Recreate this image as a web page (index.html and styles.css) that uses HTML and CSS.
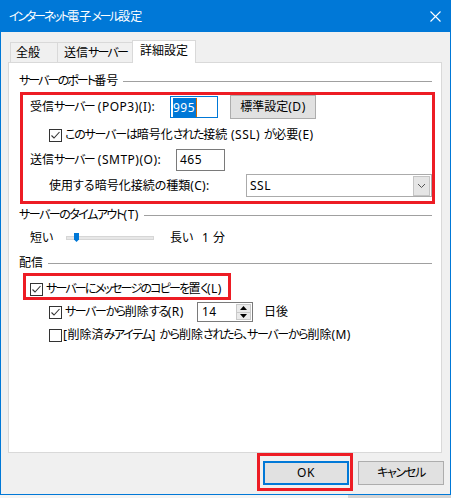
FILE: index.html
```html
<!DOCTYPE html>
<html lang="ja">
<head>
    <meta charset="UTF-8">
    <title>インターネット電子メール設定</title>
    <link rel="stylesheet" href="styles.css">
</head>
<body>

<div class="window">
    <div class="titlebar">
        <span class="title">インターネット<span class="k">電子</span>メール<span class="k">設定</span></span>
        <svg class="close" width="11" height="11" viewBox="0 0 11 11">
            <path d="M0.5 0.5L10.5 10.5M10.5 0.5L0.5 10.5" stroke="#fff" stroke-width="1.1" fill="none"/>
        </svg>
    </div>

    <div class="client">
        <div class="tabs">
            <div class="tab tab-general"><span class="k">全般</span></div>
            <div class="tab tab-send"><span class="k">送信</span>サーバー</div>
            <div class="tab tab-active"><span class="k">詳細設定</span></div>
        </div>

        <div class="panel">
            <div class="group-head head-port">サーバーのポート<span class="k">番号</span></div>

            <div class="mark port-box">
                <div class="row row-in">
                    <span class="lbl lbl-in"><span class="k">受信</span>サーバー<span class="en"> (POP3)(I):</span></span>
                    <div class="field field-in field-focus"><span class="selected en">995</span><span class="caret"></span></div>
                    <button class="btn btn-std"><span class="k">標準設定</span><span class="en">(D)</span></button>
                </div>
                <div class="row row-ssl">
                    <span class="check"><svg width="11" height="11" viewBox="0 0 11 11"><path d="M1.5 5.5L4 8L9.5 2" fill="none" stroke="#333" stroke-width="1.1"/></svg></span>
                    <span class="check-text ssl-text">このサーバーは<span class="k">暗号化</span>された<span class="k">接続</span><span class="en"> (SSL) </span>が<span class="k">必要</span><span class="en">(E)</span></span>
                </div>
                <div class="row row-out">
                    <span class="lbl lbl-out"><span class="k">送信</span>サーバー<span class="en"> (SMTP)(O):</span></span>
                    <div class="field field-out en">465</div>
                </div>
                <div class="row row-enc">
                    <span class="lbl lbl-enc"><span class="k">使用</span>する<span class="k">暗号化接続</span>の<span class="k">種類</span><span class="en">(C):</span></span>
                    <div class="combo">
                        <span class="combo-value en">SSL</span>
                        <span class="combo-btn"><svg width="9" height="6" viewBox="0 0 9 6"><path d="M1 1L4.5 4.5L8 1" fill="none" stroke="#555" stroke-width="1"/></svg></span>
                    </div>
                </div>
            </div>

            <div class="group-head head-timeout">サーバーのタイムアウト<span class="en">(T)</span></div>
            <div class="row row-slider">
                <span><span class="k">短</span>い</span>
                <div class="track"><svg class="thumb" width="5" height="9" viewBox="0 0 5 9"><path d="M0 0H5V6.5L2.5 9L0 6.5Z" fill="#0078d7"/></svg></div>
                <span class="long"><span class="k">長</span>い</span>
                <span class="minutes"><span class="en">1 </span><span class="k">分</span></span>
            </div>

            <div class="group-head head-delivery"><span class="k">配信</span></div>
            <div class="mark copy-box">
                <div class="row row-copy">
                    <span class="check"><svg width="11" height="11" viewBox="0 0 11 11"><path d="M1.5 5.5L4 8L9.5 2" fill="none" stroke="#333" stroke-width="1.1"/></svg></span>
                    <span class="check-text copy-text">サーバーにメッセージのコピーを<span class="k">置</span>く<span class="en">(L)</span></span>
                </div>
            </div>
            <div class="row row-remove">
                <span class="check"><svg width="11" height="11" viewBox="0 0 11 11"><path d="M1.5 5.5L4 8L9.5 2" fill="none" stroke="#333" stroke-width="1.1"/></svg></span>
                <span class="check-text remove-text">サーバーから<span class="k">削除</span>する<span class="en">(R)</span></span>
                <div class="spin">
                    <span class="spin-value en">14</span>
                    <span class="spin-btns">
                        <span class="spin-up"><svg width="7" height="4" viewBox="0 0 7 4"><path d="M0 4L3.5 0L7 4Z" fill="#000"/></svg></span>
                        <span class="spin-down"><svg width="7" height="4" viewBox="0 0 7 4"><path d="M0 0L3.5 4L7 0Z" fill="#000"/></svg></span>
                    </span>
                </div>
                <span class="days k">日後</span>
            </div>
            <div class="row row-deleted">
                <span class="check"></span>
                <span class="check-text deleted-text"><span class="en">[</span><span class="k">削除済</span>みアイテム<span class="en">] </span>から<span class="k">削除</span>されたら、サーバーから<span class="k">削除</span><span class="en">(M)</span></span>
            </div>
        </div>

        <div class="actions">
            <div class="mark ok-box">
                <button class="btn btn-ok"><span class="en">OK</span></button>
            </div>
            <button class="btn btn-cancel">キャンセル</button>
        </div>
    </div>
</div>
<div class="desk"></div>

</body>
</html>
```

FILE: styles.css
```css
* { box-sizing: border-box; }
body {
    margin: 0;
    background: #f4f4f4;
    font-family: "Noto Sans", "Noto Sans CJK JP", sans-serif;
    font-size: 12px;
    line-height: 16px;
    letter-spacing: -1.3px;
    color: #000;
    white-space: nowrap;
    font-feature-settings: "palt";
}
button { font: inherit; color: inherit; letter-spacing: inherit; font-feature-settings: "palt"; }

/* kanji runs keep full width, latin runs keep their own spacing */
.k { letter-spacing: 0; }
.en { letter-spacing: 0.5px; }

.window {
    width: 451px;
    height: 495px;
    border: 1px solid #0078d7;
    background: #f0f0f0;
    display: flex;
    flex-direction: column;
}
.titlebar {
    height: 31px;
    background: #0078d7;
    color: #fff;
    display: flex;
    align-items: center;
    padding-left: 8px;
}
.title { letter-spacing: -2.2px; }
.close { margin-left: auto; margin-right: 9px; }

.client { flex: 1; padding-top: 8px; }

/* tabs */
.tabs {
    display: flex;
    align-items: flex-end;
    height: 22px;
    padding-left: 9px;
    position: relative;
    z-index: 1;
}
.tab {
    height: 20px;
    border-top: 1px solid #d9d9d9;
    border-left: 1px solid #d9d9d9;
    display: flex;
    align-items: center;
}
.tab-general { width: 47px; padding-left: 5px; }
.tab-send { width: 75px; padding-left: 6px; letter-spacing: -1.8px; }
.tab-active {
    width: 64px;
    height: 23px;
    margin-bottom: -1px;
    padding-left: 7px;
    padding-bottom: 2px;
    background: #fff;
    border-right: 1px solid #d9d9d9;
}

/* panel */
.panel {
    margin-left: 7px;
    width: 434px;
    height: 391px;
    border: 1px solid #d9d9d9;
    background: #fff;
    padding: 10px 9px 0 10px;
}
.group-head {
    height: 16px;
    display: flex;
    align-items: center;
}
.group-head::after {
    content: "";
    flex: 1;
    height: 1px;
    margin-left: 5px;
    background: #a0a0a0;
}
.head-port { letter-spacing: -1.9px; }
.head-timeout { margin-top: 3px; letter-spacing: -1.5px; }
.head-delivery { margin-top: 9px; }

.mark { border: 3px solid #ed1c24; }
.row { display: flex; align-items: center; }

.port-box {
    margin: 3px -3px 0 1px;
    height: 112px;
    padding: 0 0 4px 7px;
}
.row-in { height: 24px; }
.lbl-in { width: 140px; letter-spacing: -1.5px; }
.field {
    height: 22px;
    border: 1px solid #7a7a7a;
    background: #fff;
    display: flex;
    align-items: center;
    padding-left: 3px;
}
.field-in { width: 48px; padding-left: 2px; }
.field-focus { border-color: #0078d7; }
.selected {
    background: #0078d7;
    color: #fff;
    line-height: 19px;
    padding-right: 1px;
}
.caret { width: 1px; height: 19px; background: #d06a00; }
.btn {
    height: 24px;
    width: 86px;
    border: 1px solid #adadad;
    background: #e1e1e1;
    padding: 0;
    display: flex;
    align-items: center;
    justify-content: center;
}
.btn-std { margin-left: 12px; }

.row-ssl { height: 20px; margin-top: 6px; padding-left: 19px; }
.check {
    width: 13px;
    height: 13px;
    border: 1px solid #333;
    background: #fff;
    display: inline-flex;
    flex: none;
}
.check-text { margin-left: 3px; }
.ssl-text { letter-spacing: -1.2px; }

.row-out { height: 22px; margin-top: 4px; }
.lbl-out { width: 146px; letter-spacing: -1.5px; }
.field-out { width: 49px; }

.row-enc { height: 23px; margin-top: 3px; padding-left: 19px; }
.lbl-enc { width: 197px; letter-spacing: 0; }
.lbl-enc .en { letter-spacing: 0.3px; }
.combo {
    width: 186px;
    height: 23px;
    border: 1px solid #ababab;
    background: #fff;
    display: flex;
    align-items: center;
    padding: 1px 1px 1px 3px;
}
.combo-value { flex: 1; }
.combo-btn {
    width: 17px;
    height: 20px;
    background: #e5e5e5;
    border: 1px solid #c4c4c4;
    display: flex;
    align-items: center;
    justify-content: center;
}

/* timeout slider */
.row-slider { height: 16px; margin-top: 7px; padding-left: 11px; }
.track {
    width: 88px;
    height: 4px;
    margin-left: 14px;
    background: #e7e7e7;
    border: 1px solid #d6d6d6;
    position: relative;
}
.thumb { position: absolute; left: 7px; top: -4px; }
.long { margin-left: 16px; }
.minutes { margin-left: 10px; }

/* delivery */
.copy-box {
    margin: 2px 0 0 4px;
    width: 208px;
    height: 27px;
    padding: 5px 0 0 4px;
}
.row-copy { height: 16px; }
.copy-text { letter-spacing: -1.8px; }

.row-remove { height: 20px; margin-top: 2px; padding-left: 30px; }
.remove-text { width: 132px; letter-spacing: -1.4px; }
.spin {
    width: 56px;
    height: 20px;
    border: 1px solid #7a7a7a;
    background: #fff;
    display: flex;
}
.spin-value { flex: 1; padding-left: 4px; line-height: 18px; }
.spin-btns {
    width: 17px;
    display: flex;
    flex-direction: column;
    padding: 1px;
}
.spin-up, .spin-down {
    flex: 1;
    background: #eaeaea;
    border: 1px solid #c9c9c9;
    display: flex;
    align-items: center;
    justify-content: center;
}
.spin-down { border-top: none; }
.days { margin-left: 11px; }

.row-deleted { height: 16px; margin-top: 5px; padding-left: 30px; }
.deleted-text { margin-left: 1px; letter-spacing: -1.3px; }

/* dialog buttons */
.actions {
    display: flex;
    justify-content: flex-end;
    align-items: flex-start;
    padding-right: 6px;
}
.ok-box { padding: 5px 1px 3px 3px; }
.btn-ok { border: 2px solid #0078d7; }
.btn-cancel { margin-left: 5px; margin-top: 8px; }

.desk {
    height: 3px;
    background: linear-gradient(to right, #f4f4f4 348px, #d4d4d4 348px);
}
```
